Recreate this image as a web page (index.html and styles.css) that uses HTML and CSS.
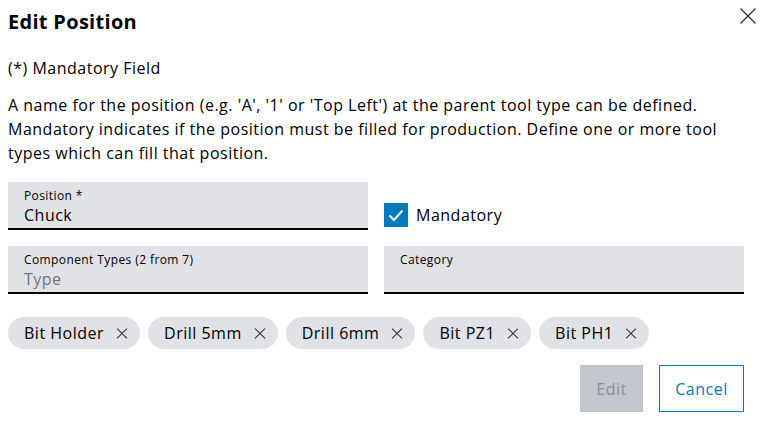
FILE: index.html
```html
<!DOCTYPE html>
<html lang="en">
<head>
  <meta charset="UTF-8">
  <title>Edit Position</title>
  <link rel="stylesheet" href="styles.css">
</head>
<body>
  <div class="dialog">
    <div class="dialog-head">
      <h2>Edit Position</h2>
      <button class="close" aria-label="Close">
        <svg width="16" height="16" viewBox="0 0 16 16"><path d="M0.5 0.5 L15.5 15.5 M15.5 0.5 L0.5 15.5" stroke="#2e3033" stroke-width="1.3" fill="none"/></svg>
      </button>
    </div>

    <p class="hint">(*) Mandatory Field</p>
    <p class="desc">A name for the position (e.g. 'A', '1' or 'Top Left') at the parent tool type can be defined. Mandatory indicates if the position must be filled for production. Define one or more tool types which can fill that position.</p>

    <!-- fields -->
    <div class="fields">
      <div class="field">
        <span class="field-label">Position *</span>
        <span class="field-value">Chuck</span>
      </div>
      <label class="check">
        <span class="check-box">
          <svg width="24" height="24" viewBox="0 0 24 24"><path d="M5.5 12.5 L10 17 L18.5 7.5" stroke="#fff" stroke-width="2" fill="none"/></svg>
        </span>
        Mandatory
      </label>
      <div class="field">
        <span class="field-label">Component Types (2 from 7)</span>
        <span class="field-value placeholder">Type</span>
      </div>
      <div class="field">
        <span class="field-label">Category</span>
        <span class="field-value"></span>
      </div>
    </div>

    <div class="chips">
      <span class="chip">Bit Holder <i class="chip-x"></i></span>
      <span class="chip">Drill 5mm <i class="chip-x"></i></span>
      <span class="chip">Drill 6mm <i class="chip-x"></i></span>
      <span class="chip">Bit PZ1 <i class="chip-x"></i></span>
      <span class="chip">Bit PH1 <i class="chip-x"></i></span>
    </div>

    <div class="actions">
      <button class="btn btn-disabled">Edit</button>
      <button class="btn btn-outline">Cancel</button>
    </div>
  </div>
</body>
</html>
```

FILE: styles.css
```css
body {
  margin: 0;
  font-family: "Open Sans", "Noto Sans", sans-serif;
  color: #000;
  background: #fff;
}

.dialog {
  width: 736px;
  padding: 8px 20px 0 8px;
}

.dialog-head {
  display: flex;
  justify-content: space-between;
  align-items: flex-start;
  height: 28px;
}

h2 {
  margin: 0;
  font-size: 20px;
  font-weight: 700;
  line-height: 28px;
  letter-spacing: 0.3px;
}

.close {
  border: none;
  background: none;
  padding: 0;
  margin: 0 -12px 0 0;
  width: 16px;
  height: 16px;
}

.hint {
  margin: 20px 0 0;
  font-size: 16px;
  line-height: 24px;
  letter-spacing: 0.5px;
}

.desc {
  margin: 13px 0 0;
  font-size: 16px;
  line-height: 24px;
  letter-spacing: 0.5px;
}

.fields {
  display: grid;
  grid-template-columns: 360px 360px;
  column-gap: 16px;
  row-gap: 16px;
  margin-top: 17px;
}

.field {
  height: 46px;
  background: #e0e2e5;
  border-bottom: 2px solid #000;
  padding: 0 16px;
  display: flex;
  flex-direction: column;
}

.field-label {
  font-size: 12px;
  line-height: 16px;
  margin-top: 6px;
  letter-spacing: 0.4px;
}

.field-value {
  font-size: 16px;
  line-height: 22px;
  letter-spacing: 0.5px;
}

.placeholder {
  color: #71767c;
}

.check {
  display: flex;
  align-items: center;
  gap: 8px;
  font-size: 16px;
  letter-spacing: 0.5px;
  margin-top: 21px;
  align-self: start;
}

.check-box {
  width: 24px;
  height: 24px;
  background: #007bc0;
  display: block;
}

.chips {
  display: flex;
  gap: 8px;
  margin-top: 23px;
}

.chip {
  display: inline-flex;
  align-items: center;
  height: 32px;
  padding: 0 12px 0 16px;
  border-radius: 16px;
  background: #e0e2e5;
  font-size: 16px;
  letter-spacing: 0.5px;
}

.chip-x {
  position: relative;
  width: 12px;
  height: 12px;
  margin-left: 12px;
}

.chip-x::before, .chip-x::after {
  content: "";
  position: absolute;
  left: -1px;
  top: 5.5px;
  width: 14px;
  height: 1.1px;
  background: #2e3033;
  transform: rotate(45deg);
}

.chip-x::after {
  transform: rotate(-45deg);
}

.actions {
  display: flex;
  justify-content: flex-end;
  gap: 16px;
  margin-top: 16px;
}

.btn {
  height: 47px;
  font-family: inherit;
  font-size: 16px;
  letter-spacing: 0.5px;
  padding: 0;
  border-radius: 0;
}

.btn-disabled {
  background: #c1c7cc;
  color: #8a9097;
  border: none;
  width: 63px;
}

.btn-outline {
  background: #fff;
  color: #007bc0;
  border: 1px solid #007bc0;
  width: 85px;
}
```
